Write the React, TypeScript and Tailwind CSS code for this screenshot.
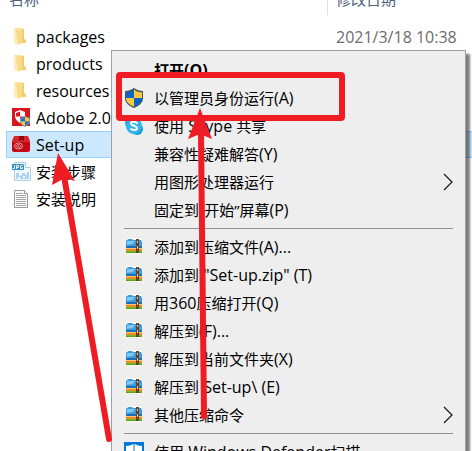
import type { ReactNode } from "react";

function FolderIcon() {
  return (
    <svg width="20" height="20" viewBox="0 0 20 20" aria-hidden="true">
      <path d="M2 1h9v15H2z" fill="#fbe3a0" />
      <path d="M8 2h4v12H8z" fill="#fff1c9" />
      <path d="M2 1l4 2v15l-4-2z" fill="#fdebb8" />
      <path d="M4 3l7-1v14l-5 1.500z" fill="#f8da88" />
      <path d="M10 2h2v10l2 1v3h-4z" fill="#f3cd6b" />
    </svg>
  );
}

function AdobeIcon() {
  return (
    <svg width="20" height="20" viewBox="0 0 20 20" aria-hidden="true">
      <path d="M0 0h18v18H0z" fill="#d9161c" />
      <path d="M3 4l5-2 5 2v4c0 3-2 5-5 7-3-2-5-4-5-7z" fill="#fff" />
      <path d="M8 3.500v5H4V5zM8 8.500h4c0 2-2 4-4 5z" fill="#d9161c" />
      <path d="M8 10l5-2 5 2v3c0 3-2 4-5 6-3-2-5-3-5-6z" fill="#8095a8" />
      <path d="M9 10.500L13 9v4.500H9z" fill="#2074c8" />
      <path d="M13 9l4 1.500v3h-4z" fill="#f9c63c" />
      <path d="M9 13.500h4V18c-2-1-4-2-4-4.500z" fill="#f9c63c" />
      <path d="M13 13.500h4c0 2.500-2 3.500-4 4.500z" fill="#2074c8" />
    </svg>
  );
}

function PackageIcon() {
  return (
    <svg width="20" height="20" viewBox="0 0 20 20" aria-hidden="true">
      <path d="M2 1h14l2 5H0z" fill="#d8252c" />
      <path d="M0 6h18v10l-2 1H2l-2-1z" fill="#c20a14" />
      <path d="M7 1h5v5l-2-1-3 1z" fill="#8f0510" />
      <path d="M0 6h18v1H0z" fill="#dc3037" />
      <ellipse cx="6.500" cy="11" rx="4" ry="3" fill="none" stroke="#e99a9c" />
      <path d="M4 11c1-2 4-2 5 0-1 2-4 2-5 0zM5.500 9.500l2 3" fill="none" stroke="#e99a9c" strokeWidth=".8" />
    </svg>
  );
}

function JpgIcon() {
  return (
    <svg width="20" height="20" viewBox="0 0 20 20" aria-hidden="true">
      <path d="M2.500.5h11l5 5v13h-16z" fill="#eef7fc" stroke="#b3cfdf" />
      <path d="M13.500.5v5h5" fill="#fff" stroke="#b3cfdf" />
      <path d="M4 11h3v3l3-1v-2h3v2h2v-3h2v7H4z" fill="#a9d5f0" />
      <path d="M6 15h2v2H6zM11 14h2v2h-2z" fill="#f7fcff" />
      <path d="M0 2h11l1 1v5H0z" fill="#2d91d2" />
      <path d="M2.500 3v3.500H.5M4.500 7V3.500h2v2h-2M10.500 3.500h-2v3h2V5" fill="none" stroke="#fff" strokeWidth=".9" />
    </svg>
  );
}

function TextIcon() {
  return (
    <svg width="20" height="20" viewBox="0 0 20 20" aria-hidden="true">
      <path d="M2.500 1.500h10l3 3v14h-13z" fill="#fafafa" stroke="#999" />
      <path d="M12.500 1.500v3h3" fill="#fff" stroke="#999" />
      <path d="M4 4.500h7M4 6.500h10M4 8.500h10M4 10.500h10M4 12.500h10M4 14.500h10M4 16.500h10" stroke="#a5a5a5" />
    </svg>
  );
}

function ShieldIcon() {
  return (
    <svg width="20" height="20" viewBox="0 0 20 20" aria-hidden="true">
      <path d="M10 0c3 2 6 3 9 3v7c0 5-4 8-9 10-5-2-9-5-9-10V3c3 0 6-1 9-3z" fill="#4e5961" />
      <path d="M10 1.500V10H2V4.500c3 0 6-1 8-3z" fill="#0866c6" />
      <path d="M10 1.500c2 2 5 3 8 3V10h-8z" fill="#ffc83d" />
      <path d="M2 10h8v8.500C5 16.500 2 14 2 10z" fill="#ffc83d" />
      <path d="M10 10h8c0 4-3 6.500-8 8.500z" fill="#0866c6" />
    </svg>
  );
}

function SkypeIcon() {
  return (
    <svg width="20" height="20" viewBox="0 0 20 20" aria-hidden="true">
      <circle cx="7" cy="7" r="6" fill="#239fdb" />
      <circle cx="13" cy="13" r="6" fill="#1797d6" />
      <circle cx="10" cy="10" r="8" fill="#30b5ee" />
      <path d="M13 7C11 5 7 5.500 7 7.500c0 2.500 6 2 6 4.500 0 2.500-4 2.500-6 1" fill="none" stroke="#fff" strokeWidth="2" strokeLinecap="round" />
    </svg>
  );
}

function ArchiveIcon() {
  return (
    <svg width="20" height="20" viewBox="0 0 20 20" aria-hidden="true">
      <path d="M2 1h16v16H2z" fill="#f8f8f4" />
      <path d="M3 3l1-1h4l1 1h8l1 2v4H2V4z" fill="#3a9de0" />
      <path d="M3 4h8l-2 3-6 1z" fill="#7fc6f2" />
      <path d="M2 9h16v2H2z" fill="#1b6fb8" />
      <path d="M2 11h16v3H2z" fill="#f08a24" />
      <path d="M2 11h16v1H2z" fill="#ffc766" />
      <path d="M2 14h16v2H2z" fill="#6cbb2a" />
      <path d="M2 15.500h16V16H2z" fill="#3f8f16" />
      <path d="M12 2h3v14h-3z" fill="#70401f" />
      <path d="M13 4h1v2h-1zM13 9h1v3h-1z" fill="#edcc91" />
    </svg>
  );
}

function DefenderIcon() {
  return (
    <svg width="20" height="20" viewBox="0 0 20 20" aria-hidden="true">
      <path d="M0 0h20v20H0z" fill="#0078d7" />
      <path d="M2 4c3 0 5-1 7.500-2v8H2zM10.500 2C13 3 15 4 18 4v6h-7.500z" fill="#fff" />
      <path d="M2 11h7.500v8C5 17 2 15 2 11zM10.500 11H18c0 4-3 6-7.500 8z" fill="#fff" />
    </svg>
  );
}

type FileEntry = { name: string; icon: ReactNode; date?: string; selected?: boolean };

const files: FileEntry[] = [
  { name: "packages", icon: <FolderIcon />, date: "2021/3/18 10:38" },
  { name: "products", icon: <FolderIcon /> },
  { name: "resources", icon: <FolderIcon /> },
  { name: "Adobe 2.0", icon: <AdobeIcon /> },
  { name: "Set-up", icon: <PackageIcon />, selected: true },
  { name: "安装步骤", icon: <JpgIcon /> },
  { name: "安装说明", icon: <TextIcon /> },
];

type Command = { label: string; icon?: ReactNode; bold?: boolean; submenu?: boolean };

const groups: Command[][] = [
  [
    { label: "打开(O)", bold: true },
    { label: "以管理员身份运行(A)", icon: <ShieldIcon /> },
    { label: "使用 Skype 共享", icon: <SkypeIcon /> },
    { label: "兼容性疑难解答(Y)" },
    { label: "用图形处理器运行", submenu: true },
    { label: "固定到“开始”屏幕(P)" },
  ],
  [
    { label: "添加到压缩文件(A)...", icon: <ArchiveIcon /> },
    { label: '添加到 "Set-up.zip" (T)', icon: <ArchiveIcon /> },
    { label: "用360压缩打开(Q)", icon: <ArchiveIcon /> },
    { label: "解压到(F)...", icon: <ArchiveIcon /> },
    { label: "解压到当前文件夹(X)", icon: <ArchiveIcon /> },
    { label: "解压到 Set-up\\ (E)", icon: <ArchiveIcon /> },
    { label: "其他压缩命令", icon: <ArchiveIcon />, submenu: true },
  ],
  [{ label: "使用 Windows Defender扫描...", icon: <DefenderIcon /> }],
];

// Latin runs are set one size up so that they balance the Chinese glyphs.
function MixedText({ text }: { text: string }) {
  return text.split(/([\x20-\x7e]+)/).map((run, index) =>
    index % 2 === 1 ? (
      <span key={index} className="text-[16px] leading-5">
        {run}
      </span>
    ) : (
      run
    ),
  );
}

function MenuItem({ label, icon, bold, submenu }: Command) {
  return (
    <button role="menuitem" className="flex h-7 w-full items-center px-3 text-left">
      <span className="h-5 w-5 shrink-0">{icon}</span>
      <span className={bold ? "ml-[10px] grow font-bold whitespace-pre" : "ml-[10px] grow whitespace-pre"}>
        <MixedText text={label} />
      </span>
      {submenu && (
        <svg width="12" height="18" viewBox="0 0 12 18" fill="none" aria-hidden="true">
          <path d="M3 1l8 8-8 8" stroke="#16161e" strokeWidth="1.200" />
        </svg>
      )}
    </button>
  );
}

function FileTable() {
  return (
    <table className="w-full table-fixed border-separate border-spacing-0 text-left">
      <thead className="text-[#4c607a]">
        <tr>
          <th className="w-[322px] p-0 font-normal">
            <div className="flex h-[15px] items-end overflow-hidden border-r border-[#e0e0e0] pb-[6px] pl-[3px]">名称</div>
          </th>
          <th className="p-0 font-normal">
            <div className="flex h-[15px] items-end overflow-hidden pb-[6px] pl-2 whitespace-nowrap">修改日期</div>
          </th>
        </tr>
        <tr aria-hidden="true">
          <td className="h-2 p-0" colSpan={2} />
        </tr>
      </thead>
      <tbody>
        {files.map((file) => (
          <tr key={file.name} className={file.selected ? "bg-[#cce8ff]" : ""}>
            <td className={file.selected ? "h-[27px] border-y border-l border-[#99d1ff] p-0" : "h-[27px] border-l border-transparent p-0"}>
              <div className="flex h-[25px] items-center gap-1 pl-[5px]">
                {file.icon}
                <span>
                  <MixedText text={file.name} />
                </span>
              </div>
            </td>
            <td className={file.selected ? "border-y border-[#99d1ff] p-0" : "p-0 pl-2 whitespace-nowrap text-[#6d6d6d]"}>
              {file.date && <MixedText text={file.date} />}
            </td>
          </tr>
        ))}
      </tbody>
    </table>
  );
}

export default function App() {
  return (
    <main className="relative h-screen overflow-hidden bg-white pl-[6px] font-['Open_Sans','Noto_Sans_CJK_SC',sans-serif] text-[15px] leading-5 text-black">
      <FileTable />

      <div role="menu" className="absolute top-[50px] right-[6px] left-[111px] border border-[#a0a0a0] bg-[#eeeeee] pt-[5px] shadow-[4px_4px_2px_#00000080]">
        {groups.map((group, index) => (
          <div key={index} role="group">
            {index > 0 && (
              <div className="flex h-[9px] items-center px-3">
                <hr className="w-full border-[#919191]" />
              </div>
            )}
            {group.map((command) => (
              <MenuItem key={command.label} {...command} />
            ))}
          </div>
        ))}
      </div>

      <svg className="pointer-events-none absolute top-0 left-0" width="472" height="451" viewBox="0 0 472 451" aria-hidden="true">
        <rect x="119" y="75" width="223" height="43" rx="1" fill="none" stroke="#f01c24" strokeWidth="6" />
        <g stroke="#f01c24" strokeWidth="6" strokeLinecap="round">
          <path d="M64 176L109 439" />
          <path d="M201 134L204 416" />
        </g>
        <path d="M58 153L75 181L65 178L52 185Z" fill="#f01c24" />
        <path d="M200 108L212 139L200 134L188 139Z" fill="#f01c24" />
      </svg>
    </main>
  );
}
